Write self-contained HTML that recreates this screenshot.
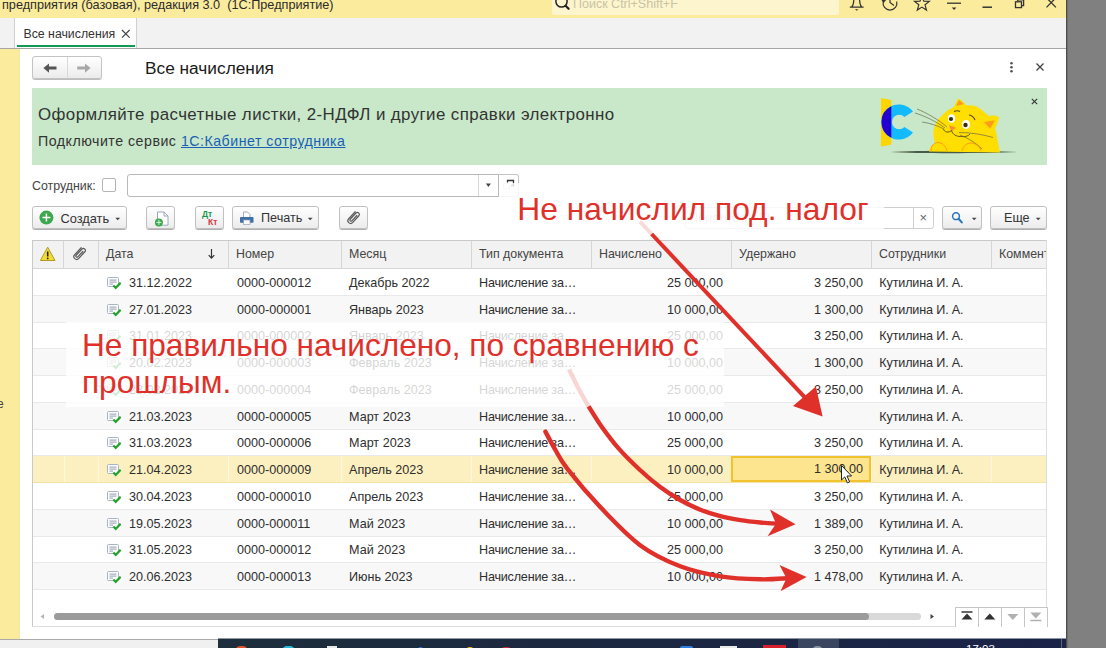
<!DOCTYPE html>
<html lang="ru">
<head>
<meta charset="utf-8">
<title>Все начисления</title>
<style>
html,body{margin:0;padding:0;}
body{width:1106px;height:648px;overflow:hidden;background:#808080;font-family:"Liberation Sans",sans-serif;color:#333;position:relative;}
.abs{position:absolute;}
#win{position:absolute;left:0;top:0;width:1066px;height:648px;background:#fff;overflow:hidden;}
#titlebar{position:absolute;left:0;top:0;width:1066px;height:18px;background:#fbeb9c;}
#titletext{position:absolute;left:2px;top:-2.200px;font-size:12.7px;color:#2b2b2b;white-space:nowrap;}
#gsearch{position:absolute;left:552px;top:-6px;width:287px;height:21px;background:#fdf5cd;border-radius:2px;}
#gsearch span{position:absolute;left:21px;top:3px;font-size:12.500px;color:#c9c3a5;white-space:nowrap;}
#tabstrip{position:absolute;left:0;top:18px;width:1066px;height:30px;background:#f2f2f2;border-bottom:1px solid #a6a6a6;}
#tab{position:absolute;left:14px;top:0;width:123px;height:30px;background:#fff;border-left:1px solid #d0d0d0;border-right:1px solid #d0d0d0;box-sizing:border-box;}
#tab .t{position:absolute;left:8.500px;top:8.500px;font-size:12.300px;color:#333;white-space:nowrap;}
#tab .x{position:absolute;left:105px;top:5px;font-size:14px;color:#444;}
#tab .u{position:absolute;left:2px;top:27px;width:118px;height:2px;background:#129a55;}
#side{position:absolute;left:0;top:49px;width:19px;height:590px;background:#fbeb9c;border-right:1px solid #f3e7b0;}
#side span{position:absolute;left:-3px;top:348px;font-size:12px;color:#444;}
#bottom{position:absolute;left:0;top:639px;width:1066px;height:9px;background:#f0f0f0;border-top:1px solid #a9a9a9;box-sizing:border-box;}
#taskbar{position:absolute;left:218px;top:639px;width:848px;height:9px;background:#1c2a3e;overflow:hidden;}
#tbedge{position:absolute;left:218px;top:638px;width:848px;height:1px;background:#8f97a1;}
#shadow{position:absolute;left:1066px;top:0;width:2px;height:648px;background:linear-gradient(90deg,#3a3a3a,#808080);}

#nav{position:absolute;left:32px;top:56px;width:70px;height:23px;box-sizing:border-box;border:1px solid #c3c3c3;border-radius:3px;background:linear-gradient(#fff,#ececec);box-shadow:0 1px 0 #bdbdbd;}
#nav i{position:absolute;left:34px;top:0;width:1px;height:21px;background:#d9d9d9;}
#ptitle{position:absolute;left:145px;top:58px;font-size:17.3px;color:#1a1a1a;white-space:nowrap;}

#banner{position:absolute;left:32px;top:88px;width:1015px;height:77px;background:#c8e8c9;}
#banner .l1{position:absolute;left:6px;top:17px;font-size:16.9px;letter-spacing:0.4px;color:#333;white-space:nowrap;}
#banner .l2{position:absolute;left:6px;top:45px;font-size:14.2px;letter-spacing:0.5px;color:#333;white-space:nowrap;}
#banner .l2 a{color:#1a5fb4;text-decoration:underline;}
#banner .x{position:absolute;left:998px;top:5px;font-size:15px;color:#333;}

.lbl{position:absolute;left:32px;top:179px;font-size:12.4px;color:#444;white-space:nowrap;}
#chk{position:absolute;left:102px;top:178px;width:14px;height:14px;box-sizing:border-box;border:1px solid #b5b5b5;border-radius:2px;background:#fff;}
#inp{position:absolute;left:127px;top:174px;width:372px;height:23px;box-sizing:border-box;border:1px solid #b9b9b9;border-radius:3px 0 0 3px;background:#fff;}
#inp i{position:absolute;left:350px;top:0;width:1px;height:21px;background:#d5d5d5;}
#inp b{position:absolute;left:357.800px;top:8.400px;width:0;height:0;border-left:2.600px solid transparent;border-right:2.600px solid transparent;border-top:3.400px solid #444;}
#inpbtn{position:absolute;left:499px;top:174px;width:19.500px;height:23px;box-sizing:border-box;border:1px solid #c5c5c5;border-left:none;border-radius:0 3px 3px 0;background:#fff;}

.btn{position:absolute;top:206px;height:23px;box-sizing:border-box;border:1px solid #c0c0c0;border-radius:3px;background:linear-gradient(#ffffff,#ececec);box-shadow:0 1px 0 #b0b0b0;font-size:12.6px;color:#333;white-space:nowrap;}
.btn span{position:absolute;top:4px;}
.caret{position:absolute;top:10px;width:7px;height:4px;background:#444;clip-path:polygon(0.800px 0.800px,5.600px 0.800px,3.200px 3.300px);}

#sinp{position:absolute;left:685px;top:207px;width:249px;height:22px;box-sizing:border-box;border:1px solid #cfcfcf;border-radius:3px;background:#fff;}
#sinp i{position:absolute;left:227px;top:0;width:1px;height:20px;background:#d0d0d0;}
#sinp .x{position:absolute;left:233.500px;top:2px;font-size:13px;color:#666;}
#sinp .ph{position:absolute;left:3px;top:3px;font-size:12.6px;color:#bbb;white-space:nowrap;}

#tbl{position:absolute;left:32px;top:240px;width:1015px;height:387px;border:1px solid #c9c9c9;border-right-color:#dedede;border-bottom-color:#dedede;box-sizing:border-box;background:#fff;overflow:hidden;}
#thead{position:absolute;left:0;top:0;width:1015px;height:27px;background:#f2f2f2;border-bottom:1px solid #d6d6d6;}
.th{position:absolute;top:0;height:27px;border-left:1px solid #d6d6d6;font-size:12.4px;color:#444;line-height:27px;white-space:nowrap;box-sizing:border-box;padding-left:7px;overflow:hidden;}
.row{position:absolute;left:0;width:1015px;height:27px;font-size:12.6px;color:#2e2e2e;line-height:28px;white-space:nowrap;border-bottom:1px solid #e9e9e9;box-sizing:border-box;}
.row.alt{background:#f8f8f8;}
.row.sel{background:#fdf0c0;border-bottom-color:#f3e2a3;}
.row span{position:absolute;top:0;}
.c1{left:95.900px}.c2{left:204px}.c3{left:316px}.c4{left:446px;letter-spacing:-0.200px}.c5{right:325px;text-align:right}.c6{right:185px;text-align:right}.c7{left:846.300px;letter-spacing:-0.150px}
.doc{position:absolute;left:74.300px;top:8px;width:14px;height:13px;}

#selcell{position:absolute;left:731px;top:456px;width:140px;height:26px;box-sizing:border-box;border:2px solid #f3c22f;background:#fde590;}
#selcell span{position:absolute;right:6px;top:0;line-height:23px;font-size:12.6px;color:#2e2e2e;white-space:nowrap;}
#ov1{position:absolute;left:499px;top:183px;width:385px;height:51px;background:rgba(255,255,255,0.82);}
#ov2{position:absolute;left:66px;top:322px;width:658px;height:84.500px;background:rgba(255,255,255,0.80);}
.red{position:absolute;color:#e0302a;font-size:31.750px;white-space:nowrap;line-height:36.400px;}
#hsb{position:absolute;left:54px;top:613px;width:867px;height:7px;border-radius:4px;background:#d9d9d9;}
#hsb i{position:absolute;left:0;top:0;width:815px;height:7px;border-radius:4px;background:#9b9b9b;}
#vnav{position:absolute;left:955px;top:607px;width:93px;height:20px;box-sizing:border-box;border:1px solid #c6c6c6;border-bottom:none;background:#fff;}
#vnav i{position:absolute;top:0;width:1px;height:19px;background:#c6c6c6;}

#seldiv i{position:absolute;top:456px;width:1px;height:25.500px;background:#fef7df;}
</style>
</head>
<body>
<div id="win">
<svg width="0" height="0" style="position:absolute">
  <defs>
    <g id="docic">
      <rect x="0.5" y="0.5" width="11" height="9" rx="1" fill="#fbfcfd" stroke="#aab3c2" stroke-width="1"/>
      <path d="M2.5 3.1h7M2.5 5.1h7M2.500 7.100h3.500" stroke="#8d96a3" stroke-width="0.900" fill="none"/>
      <path d="M6.400 8.500l2.300 2.500l4.900-5.300" stroke="#22a32e" stroke-width="2.200" fill="none"/>
    </g>
    <g id="clip">
      <path d="M5.500 -2.600L-4.400 -2.600A2.600 2.600 0 0 0 -4.400 2.600L5 2.600A1.900 1.900 0 0 0 5 -1.200L-3.600 -1.200A1.100 1.100 0 0 0 -3.600 1L3.800 1" transform="translate(8 8) rotate(-47) scale(0.93 1)" stroke="#5a5a5a" stroke-width="1.150" fill="none" stroke-linecap="round"/>
    </g>
  </defs>
</svg>

  <div id="titlebar">
    <div id="titletext">предприятия (базовая), редакция 3.0&nbsp; (1С:Предприятие)</div>
    <div id="gsearch"><span>Поиск Ctrl+Shift+F</span></div>
    <svg class="abs" style="left:552px;top:0" width="30" height="18" viewBox="0 0 30 18"><circle cx="9.5" cy="1.5" r="5.6" fill="none" stroke="#222" stroke-width="1.5"/><path d="M13.6 5.8l3 3" stroke="#222" stroke-width="2.2" stroke-linecap="round"/></svg>
    <svg class="abs" style="left:845px;top:0" width="221" height="18" viewBox="845 0 221 18" fill="none" stroke="#333" stroke-width="1.2">
      <path d="M849.800 7.200h13.800M851.800 7c2.200-2.400 1.800-6 2.200-9M861.600 7c-2.200-2.400-1.800-6-2.200-9"/><path d="M855 9.3h3.4l-1.7 1.4z" fill="#333" stroke="none"/>
      <path d="M883.300 1.500a6.900 6.900 0 1 0 13.400 0"/><path d="M890 -2v4.500l4 3"/><path d="M881.200 -0.500l2.200 3.400l2.800-2.600" fill="#333" stroke="none"/>
      <path d="M921.9 -4.0L923.8 1.2L929.3 1.4L925.0 4.8L926.5 10.1L921.9 7.1L917.3 10.1L918.8 4.8L914.5 1.4L920.0 1.2z"/>
      <path d="M947 3.2h14" stroke-width="1.3"/><path d="M951.8 7.6h4.6l-2.3 2.4z" fill="#333" stroke="none"/>
      <path d="M982.5 7.2h9.5" stroke-width="1.5"/>
      <rect x="1015.5" y="1.8" width="6" height="5.8" stroke-width="1.3"/><path d="M1017.6 1.8v-2h6v5.8h-2" stroke-width="1.3"/>
      <path d="M1046.5 -2.2l9.4 9.6M1055.9 -2.2l-9.4 9.6" stroke-width="1.3"/>
    </svg>

  </div>
  <div id="tabstrip">
    <div id="tab"><span class="t">Все начисления</span><svg class="abs" style="left:106px;top:11px" width="10" height="10" viewBox="0 0 10 10"><path d="M1 1l7.600 7.600M8.600 1l-7.600 7.600" stroke="#444" stroke-width="1.200"/></svg><div class="u"></div></div>
  </div>
  <div id="side"><span>е</span></div>

  <div id="nav"><i></i><svg class="abs" style="left:0;top:0" width="68" height="21" viewBox="33 57 68 21"><path d="M43.4 68.1l5.6-4.7v3.2h7.5v3h-7.5v3.2z" fill="#555"/><path d="M90.6 68.1l-5.6-4.7v3.2h-7.8v3h7.8v3.2z" fill="#a8a8a8"/></svg></div>
  <div id="ptitle">Все начисления</div>

  <svg class="abs" style="left:1000px;top:56px" width="56" height="24" viewBox="1000 56 56 24"><circle cx="1011.5" cy="63.3" r="1.3" fill="#555"/><circle cx="1011.5" cy="67.3" r="1.3" fill="#555"/><circle cx="1011.5" cy="71.3" r="1.3" fill="#555"/><path d="M1036.5 63.5l7 7M1043.5 63.5l-7 7" stroke="#444" stroke-width="1.3"/></svg>
  <div id="banner">
    <div class="l1">Оформляйте расчетные листки, 2-НДФЛ и другие справки электронно</div>
    <div class="l2">Подключите сервис <a>1С:Кабинет сотрудника</a></div>
    <svg class="abs" style="left:840px;top:0" width="160" height="77" viewBox="872 88 160 77">
      <path d="M881 98l10.3 2v44.5l-10.3 2.2z" fill="#ffd500"/>
      <path d="M913 111.5a17.6 17.6 0 1 0 0 21l-8.6-5.6a7.2 7.2 0 1 1 0-9.8z" fill="#12baff"/>
      <path d="M891.3 106.2a17.6 17.6 0 0 0 0 31.6z" fill="#2400d0"/>
      <path d="M890 152c30-1.6 90-1.6 128 0c-40 1.6-98 1.6-128 0z" fill="#4a5a48"/>
      <path d="M929 151.5c1-5 3-7 6-8c-3-10-2-20 6-27c4-5 8-7.5 13-9.500l4-8.500c3 1 6 4 8 7c5-1 10 0 14 3c3 3 6 5 9 7.500c4-1 7-0.500 10 1c-1 4-2 8-4 11c2 8 3 16 5 24.500z" fill="#ffde00"/>
      <path d="M956 106l3-6l5 4z" fill="#ff9a1a"/><path d="M984 122l11-1.500l-5 8z" fill="#ff9a1a"/>
      <path d="M949 125.500l7 2l-4.500 4z" fill="#ff8a3a"/>
      <ellipse cx="951.500" cy="118.500" rx="3.600" ry="4.200" fill="#fff"/><ellipse cx="966" cy="124.500" rx="3.800" ry="4.400" fill="#fff"/>
      <circle cx="951" cy="119" r="2.100" fill="#3a2a10"/><circle cx="965.500" cy="125" r="2.200" fill="#3a2a10"/>
      <path d="M954 111.500c2-1 4-1 6 0M969 115c3 0.500 5 2.500 6 5" stroke="#5a4a10" stroke-width="1.200" fill="none"/>
      <path d="M943.500 129c1 3.500 5 4 8 1.500c1 4 5 6 9 6c5 0.500 8-0.500 9.500-2.500" stroke="#5a4a10" stroke-width="0.900" fill="none"/>
      <path d="M917 109c10 4 22 11 30 18M915 113c10 3 22 9 30 15M922 122c8 1 16 4 22 7M959 132.500c12 0 24 2 34 5M960 135c8 3 16 8 22 14" stroke="#6a6a4a" stroke-width="0.700" fill="none"/>
      <path d="M931 151c0-5 3-8.500 7-8.500s8 3.500 9 8.500M962 151c1-5 5-8 9-8s9 3.500 10 8" stroke="#ff9a1a" stroke-width="1" fill="none"/>
    </svg>
    <svg class="abs" style="left:998px;top:9px" width="9" height="9" viewBox="0 0 9 9"><path d="M1.800 1.800l5.400 5.400M7.200 1.800l-5.400 5.400" stroke="#333" stroke-width="1.100"/></svg>
  </div>

  <div class="lbl">Сотрудник:</div>
  <div id="chk"></div>
  <div id="inp"><i></i><svg class="abs" style="left:356px;top:6px" width="10" height="8" viewBox="0 0 10 8"><path d="M1.900 2.400h5l-2.500 3.500z" fill="#444"/></svg></div>
  <div id="inpbtn"><svg class="abs" style="left:3px;top:3px" width="13" height="13" viewBox="0 0 13 13"><rect x="1.500" y="5.500" width="6" height="5" fill="none" stroke="#cfcfcf" stroke-width="1"/><path d="M5.500 4.500v-2h6v5h-2.500" fill="none" stroke="#333" stroke-width="1.300"/></svg></div>

  <div class="btn" style="left:32px;width:95px;"><svg class="abs" style="left:6px;top:3px" width="16" height="16" viewBox="0 0 16 16"><circle cx="7.400" cy="7.600" r="7" fill="#3aa84c"/><path d="M7.400 3.600v8M3.400 7.600h8" stroke="#fff" stroke-width="1.500"/></svg><span style="left:27.500px;font-size:12.800px">Создать</span><div class="caret" style="left:81.500px"></div></div>
  <div class="btn" style="left:146px;width:29px;"><svg class="abs" style="left:5px;top:2px" width="18" height="18" viewBox="151 208 18 18"><path d="M156.500 211h6.500l4 4v9.200h-10.500z" fill="#fff" stroke="#9aa7b8" stroke-width="1"/><path d="M163 211v4h4" fill="none" stroke="#9aa7b8" stroke-width="1"/><circle cx="157.900" cy="221.400" r="4" fill="#3aa84c"/><path d="M157.900 218.900v5M155.400 221.400h5" stroke="#d8f0dc" stroke-width="1"/></svg></div>
  <div class="btn" style="left:195px;width:29px;"><span style="left:6px;top:3px;font-size:8.500px;font-weight:bold;color:#159a4a;line-height:9px">Дт</span><span style="left:12px;top:10.500px;font-size:8.500px;font-weight:bold;color:#d9333f;line-height:9px">Кт</span></div>
  <div class="btn" style="left:232px;width:87px;"><svg class="abs" style="left:6px;top:3px" width="16" height="16" viewBox="239 209 16 16"><path d="M243.500 211h4l2.500 2.500v3h-6.500z" fill="#fff" stroke="#8a9ab0" stroke-width="0.800"/><rect x="240" y="216" width="13.500" height="5.800" rx="0.800" fill="#3f6fa6"/><rect x="243.500" y="219" width="6.500" height="4.300" fill="#fff" stroke="#8a9ab0" stroke-width="0.700"/></svg><span style="left:28px">Печать</span><div class="caret" style="left:74px"></div></div>
  <div class="btn" style="left:339px;width:29px;"><svg class="abs" style="left:5px;top:2px" width="17" height="17" viewBox="0 0 16 16"><use href="#clip"/></svg></div>
  <div id="sinp"><span class="ph">Поиск (Ctrl+F)</span><i></i><span class="x">×</span></div>
  <div class="btn" style="left:942px;width:40px;"><svg class="abs" style="left:8px;top:4px" width="14" height="14" viewBox="0 0 14 14"><circle cx="5" cy="5.200" r="3.400" fill="none" stroke="#2a76ba" stroke-width="1.500"/><path d="M7.600 7.800l3.200 3.600" stroke="#2a76ba" stroke-width="2.100" stroke-linecap="round"/></svg><div class="caret" style="left:28px"></div></div>
  <div class="btn" style="left:990px;width:57px;"><span style="left:13px">Еще</span><div class="caret" style="left:44px"></div></div>

  <div id="tbl">
    <div id="thead">
      <div class="th" style="left:0;width:32px;border-left:none"><svg class="abs" style="left:6px;top:5px" width="18" height="16" viewBox="39 246 18 16"><path d="M47.700 247.200l7.300 13.300h-14.600z" fill="#f2dc3a" stroke="#b39a1e" stroke-width="1" stroke-linejoin="round"/><path d="M47.700 251.500v5" stroke="#222" stroke-width="1.600"/><circle cx="47.700" cy="258.400" r="0.900" fill="#222"/></svg></div>
      <div class="th" style="left:30px;width:36px"><svg class="abs" style="left:6.500px;top:4px" width="17" height="17" viewBox="0 0 16 16"><use href="#clip"/></svg></div>
      <div class="th" style="left:65px;width:131px">Дата<svg class="abs" style="left:108px;top:7px" width="9" height="12" viewBox="0 0 9 12"><path d="M4.500 1v9M1.700 7.200l2.800 3l2.800-3" stroke="#333" stroke-width="1.200" fill="none"/></svg></div>
      <div class="th" style="left:195px;width:113px">Номер</div>
      <div class="th" style="left:308px;width:130px">Месяц</div>
      <div class="th" style="left:438px;width:120px">Тип документа</div>
      <div class="th" style="left:558px;width:140px">Начислено</div>
      <div class="th" style="left:698px;width:140px">Удержано</div>
      <div class="th" style="left:838px;width:120px">Сотрудники</div>
      <div class="th" style="left:958px;width:57px">Комментарий</div>
    </div>
    <div id="rows">
<div class="row" style="top:28.00px"><svg class="doc" viewBox="0 0 14 13"><use href="#docic"/></svg><span class="c1">31.12.2022</span><span class="c2">0000-000012</span><span class="c3">Декабрь 2022</span><span class="c4">Начисление за…</span><span class="c5">25 000,00</span><span class="c6">3 250,00</span><span class="c7">Кутилина И. А.</span></div>
<div class="row alt" style="top:54.73px"><svg class="doc" viewBox="0 0 14 13"><use href="#docic"/></svg><span class="c1">27.01.2023</span><span class="c2">0000-000001</span><span class="c3">Январь 2023</span><span class="c4">Начисление за…</span><span class="c5">10 000,00</span><span class="c6">1 300,00</span><span class="c7">Кутилина И. А.</span></div>
<div class="row" style="top:81.46px"><svg class="doc" viewBox="0 0 14 13"><use href="#docic"/></svg><span class="c1">31.01.2023</span><span class="c2">0000-000002</span><span class="c3">Январь 2023</span><span class="c4">Начисление за…</span><span class="c5">25 000,00</span><span class="c6">3 250,00</span><span class="c7">Кутилина И. А.</span></div>
<div class="row alt" style="top:108.19px"><svg class="doc" viewBox="0 0 14 13"><use href="#docic"/></svg><span class="c1">20.02.2023</span><span class="c2">0000-000003</span><span class="c3">Февраль 2023</span><span class="c4">Начисление за…</span><span class="c5">10 000,00</span><span class="c6">1 300,00</span><span class="c7">Кутилина И. А.</span></div>
<div class="row" style="top:134.92px"><svg class="doc" viewBox="0 0 14 13"><use href="#docic"/></svg><span class="c1">28.02.2023</span><span class="c2">0000-000004</span><span class="c3">Февраль 2023</span><span class="c4">Начисление за…</span><span class="c5">25 000,00</span><span class="c6">3 250,00</span><span class="c7">Кутилина И. А.</span></div>
<div class="row alt" style="top:161.65px"><svg class="doc" viewBox="0 0 14 13"><use href="#docic"/></svg><span class="c1">21.03.2023</span><span class="c2">0000-000005</span><span class="c3">Март 2023</span><span class="c4">Начисление за…</span><span class="c5">10 000,00</span><span class="c6"></span><span class="c7">Кутилина И. А.</span></div>
<div class="row" style="top:188.38px"><svg class="doc" viewBox="0 0 14 13"><use href="#docic"/></svg><span class="c1">31.03.2023</span><span class="c2">0000-000006</span><span class="c3">Март 2023</span><span class="c4">Начисление за…</span><span class="c5">25 000,00</span><span class="c6">3 250,00</span><span class="c7">Кутилина И. А.</span></div>
<div class="row alt sel" style="top:215.11px"><svg class="doc" viewBox="0 0 14 13"><use href="#docic"/></svg><span class="c1">21.04.2023</span><span class="c2">0000-000009</span><span class="c3">Апрель 2023</span><span class="c4">Начисление за…</span><span class="c5">10 000,00</span><span class="c6">1 300,00</span><span class="c7">Кутилина И. А.</span></div>
<div class="row" style="top:241.84px"><svg class="doc" viewBox="0 0 14 13"><use href="#docic"/></svg><span class="c1">30.04.2023</span><span class="c2">0000-000010</span><span class="c3">Апрель 2023</span><span class="c4">Начисление за…</span><span class="c5">25 000,00</span><span class="c6">3 250,00</span><span class="c7">Кутилина И. А.</span></div>
<div class="row alt" style="top:268.57px"><svg class="doc" viewBox="0 0 14 13"><use href="#docic"/></svg><span class="c1">19.05.2023</span><span class="c2">0000-000011</span><span class="c3">Май 2023</span><span class="c4">Начисление за…</span><span class="c5">10 000,00</span><span class="c6">1 389,00</span><span class="c7">Кутилина И. А.</span></div>
<div class="row" style="top:295.30px"><svg class="doc" viewBox="0 0 14 13"><use href="#docic"/></svg><span class="c1">31.05.2023</span><span class="c2">0000-000012</span><span class="c3">Май 2023</span><span class="c4">Начисление за…</span><span class="c5">25 000,00</span><span class="c6">3 250,00</span><span class="c7">Кутилина И. А.</span></div>
<div class="row alt" style="top:322.03px"><svg class="doc" viewBox="0 0 14 13"><use href="#docic"/></svg><span class="c1">20.06.2023</span><span class="c2">0000-000013</span><span class="c3">Июнь 2023</span><span class="c4">Начисление за…</span><span class="c5">10 000,00</span><span class="c6">1 478,00</span><span class="c7">Кутилина И. А.</span></div>
</div><!--rows-->
  </div>


  <div id="seldiv"><i style="left:63.5px"></i><i style="left:98px"></i><i style="left:228px"></i><i style="left:341px"></i><i style="left:471px"></i><i style="left:591px"></i><i style="left:871px"></i><i style="left:991px"></i></div>
  <div id="selcell"><span>1 300,00</span></div>
  <div id="hsb"><i></i></div>
  <svg class="abs" style="left:38px;top:611px" width="10" height="10" viewBox="0 0 10 10"><path d="M6 3v5l-3.500-2.500z" fill="#b5b5b5"/></svg>
  <svg class="abs" style="left:927px;top:611px" width="10" height="10" viewBox="0 0 10 10"><path d="M3.500 3v5l3.500-2.500z" fill="#444"/></svg>
  <div id="vnav"><i style="left:22px"></i><i style="left:45px"></i><i style="left:68px"></i>
    <svg class="abs" style="left:0;top:0" width="91" height="19" viewBox="956 608 91 19">
      <path d="M961.500 612h11" stroke="#333" stroke-width="1.500"/><path d="M967 613.500l5.500 6h-11z" fill="#333"/>
      <path d="M989.800 613.500l5.500 6h-11z" fill="#333"/>
      <path d="M1012.800 620l5.500-6h-11z" fill="#b0b0b0"/>
      <path d="M1035.800 618.500l5.500-6h-11z" fill="#b0b0b0"/><path d="M1030.300 620.500h11" stroke="#b0b0b0" stroke-width="1.500"/>
    </svg>
  </div>

  <div id="ov1"></div>
  <div id="ov2"></div>
  <div class="red" style="left:517.300px;top:190.800px;">Не начислил под. налог</div>
  <div class="red" style="left:82px;top:327.200px;font-size:31.600px">Не правильно начислено, по сравнению с<br>прошлым.</div>
  <svg class="abs" style="left:0;top:0" width="1066" height="648" viewBox="0 0 1066 648">
    <defs><linearGradient id="fd1" gradientUnits="userSpaceOnUse" x1="642" y1="222" x2="662" y2="244"><stop offset="0" stop-color="#e0302a" stop-opacity="0.100"/><stop offset="0.450" stop-color="#e0302a" stop-opacity="0.250"/><stop offset="0.500" stop-color="#e0302a" stop-opacity="1"/><stop offset="1" stop-color="#e0302a"/></linearGradient>
    <linearGradient id="fd2" gradientUnits="userSpaceOnUse" x1="570" y1="369" x2="585" y2="405"><stop offset="0" stop-color="#e0302a" stop-opacity="0.150"/><stop offset="0.950" stop-color="#e0302a" stop-opacity="0.300"/><stop offset="1" stop-color="#e0302a" stop-opacity="1"/></linearGradient></defs>
    <path d="M640 221.700L651.600 234" stroke="#e0302a" stroke-opacity="0.180" stroke-width="4" fill="none"/>
    <path d="M651.600 234L806 398.700" stroke="#e0302a" stroke-width="4" fill="none"/>
    <path d="M822.600 416.400L793 406L815.900 386.500z" fill="#e0302a"/>
    <path d="M569.1 369.4C570.7 372.6 575.2 382.3 578.5 388.5C581.8 394.7 586.9 403.4 588.6 406.4" stroke="#e0302a" stroke-opacity="0.200" stroke-width="4.400" fill="none"/>
    <path d="M588.6 406.4C590.8 409.8 596.6 419.6 601.7 426.7C606.8 433.8 612.6 441.7 619.0 448.9C625.4 456.1 633.1 463.6 640.0 470.0C646.9 476.4 653.5 482.0 660.2 487.0C666.9 492.0 673.5 496.2 680.2 500.0C686.9 503.8 693.6 507.0 700.3 509.7C707.0 512.4 713.6 514.4 720.3 516.1C727.0 517.8 733.7 519.0 740.4 520.1C747.1 521.2 754.1 521.9 760.4 522.5C766.7 523.1 775.1 523.6 778.0 523.8" stroke="#e0302a" stroke-width="4.400" fill="none"/>
    <path d="M795.500 524.200L770 509.500L776 523.700L767.500 536.200z" fill="#e0302a"/>
    <path d="M545.4 431.6C547.0 434.5 551.2 442.7 554.8 448.9C558.4 455.1 559.7 459.0 567.2 468.6C574.7 478.2 587.9 494.0 600.0 506.8C612.1 519.6 626.7 535.3 640.1 545.2C653.5 555.1 666.8 561.1 680.2 566.3C693.6 571.5 706.9 574.1 720.3 576.3C733.7 578.5 749.1 579.0 760.4 579.3C771.7 579.6 783.4 578.4 788.0 578.2" stroke="#e0302a" stroke-width="4.400" fill="none" stroke-linecap="round"/>
    <path d="M806.600 576.900L779.500 564.900L786.500 578.300L780.500 591.300z" fill="#e0302a"/>
    <path d="M841.500 465.500v14.500l3.300-3.100l2.600 6l2.200-1l-2.600-5.900h4.600z" fill="#fff" stroke="#222" stroke-width="1" stroke-linejoin="round"/>
  </svg>
  <div id="bottom"></div>
  <div id="tbedge"></div>
  <div id="taskbar">
    <div class="abs" style="left:0;top:0;width:848px;height:9px;background:linear-gradient(90deg,#1d2e3c 0,#1c2840 40%,#1a2348 100%)"></div>
    <div class="abs" style="left:580px;top:0;width:41px;height:9px;background:#3a4560"></div>
    <div class="abs" style="left:462px;top:6.500px;width:13px;height:6px;border-radius:2px 2px 0 0;background:#2f7fe0"></div>
    <div class="abs" style="left:502px;top:6.500px;width:17px;height:6px;background:#e9e9e9"></div>
    <div class="abs" style="left:545px;top:6px;width:23px;height:6px;background:#d8202c"></div>
    <div class="abs" style="left:594px;top:6.500px;width:11px;height:10px;border-radius:6px;background:#8d94a3"></div>
    <div class="abs" style="left:18px;top:7px;width:11px;height:8px;border-radius:5px;background:#e2532a"></div>
    <div class="abs" style="left:63.500px;top:7px;width:13.500px;height:10px;border-radius:6px;background:#2bb8d6"></div>
    <div class="abs" style="left:109px;top:6.500px;width:10px;height:8px;background:#e8e8e8"></div>
    <div class="abs" style="left:200px;top:8px;width:5px;height:5px;border-radius:3px;background:#2a7de0"></div>
    <div class="abs" style="left:248px;top:7.500px;width:8px;height:8px;border-radius:4px;background:#f2c01e"></div>
    <div class="abs" style="left:283px;top:7.500px;width:10px;height:8px;border-radius:5px;background:#c8283a"></div>
    <div class="abs" style="left:748px;top:4px;font-size:11.500px;color:#fff;line-height:12px;white-space:nowrap">17:03</div>
    <div class="abs" style="left:843px;top:0;width:1px;height:9px;background:#5a6580"></div>
  </div>
</div>
<div id="shadow"></div>
</body>
</html>
